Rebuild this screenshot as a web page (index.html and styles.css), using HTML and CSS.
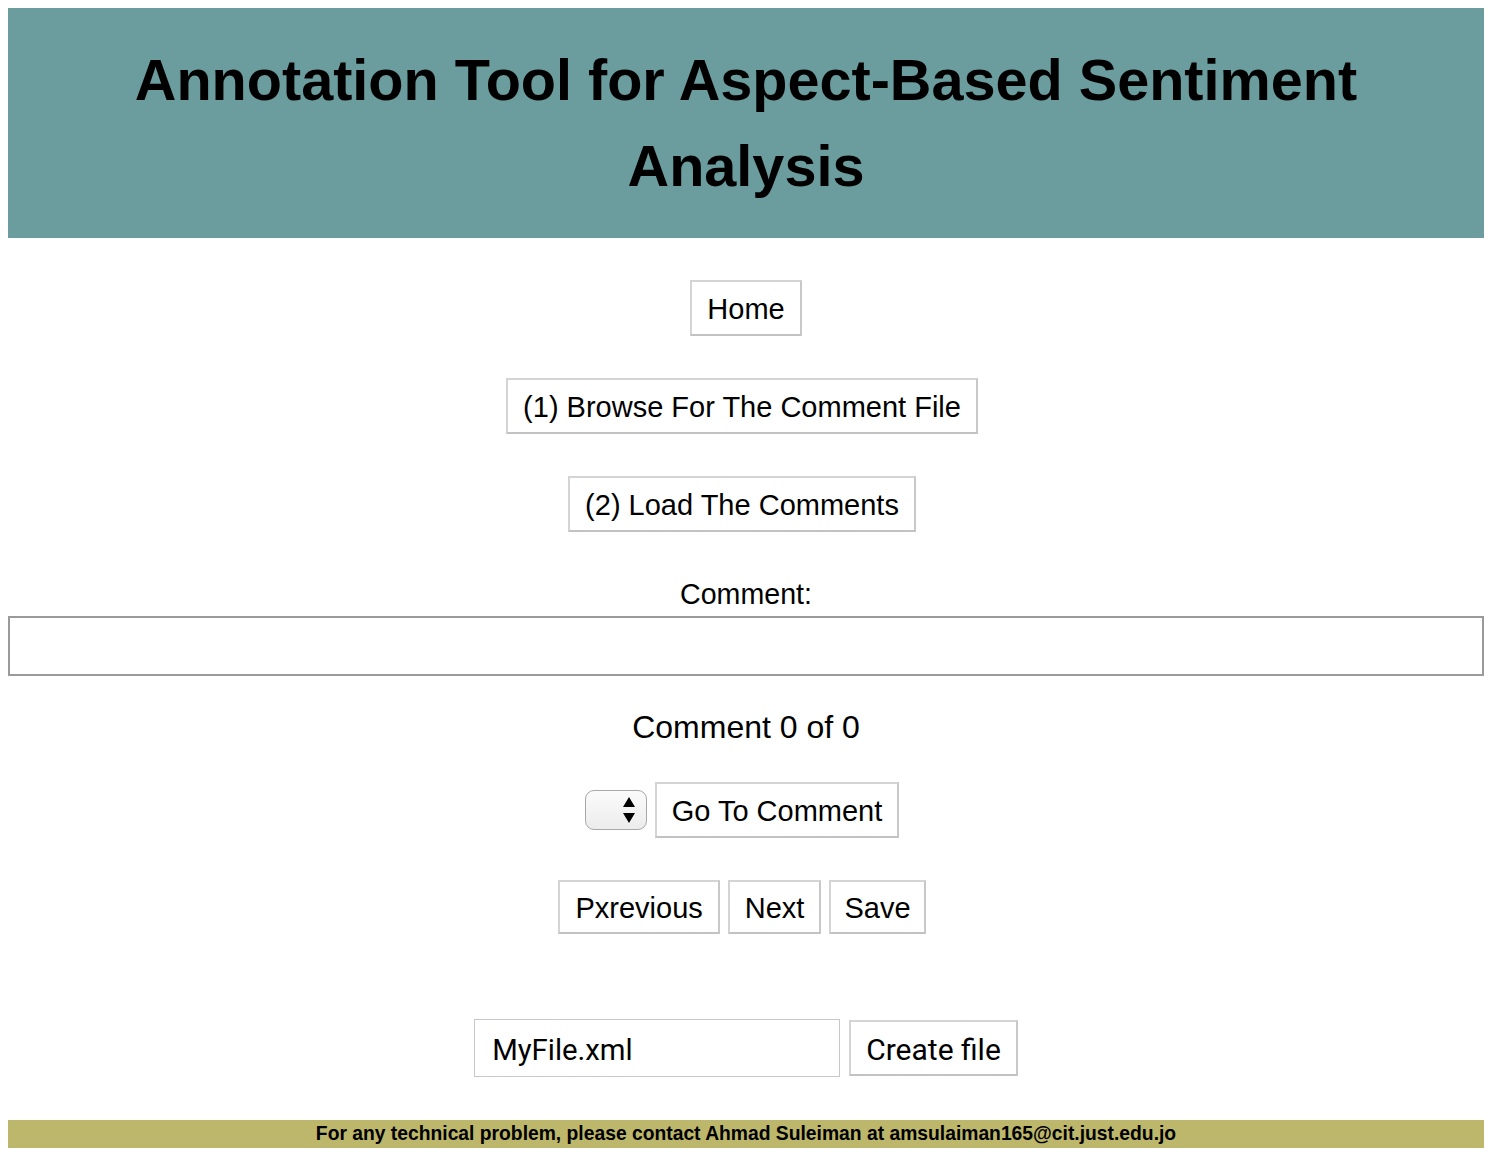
FILE: index.html
```html
<!DOCTYPE html>
<html>
<head>
<meta charset="utf-8">
<title>Annotation Tool</title>
<link rel="stylesheet" href="styles.css">
</head>
<body>
<header class="banner">
  <h1 class="title">Annotation Tool for Aspect-Based Sentiment Analysis</h1>
</header>
<main class="main">
  <button class="btn btn-home">Home</button>
  <button class="btn btn-gap shift">(1) Browse For The Comment File</button>
  <button class="btn btn-gap shift">(2) Load The Comments</button>
  <div class="label">Comment:</div>
  <div class="comment-box"></div>
  <div class="counter">Comment 0 of 0</div>
  <div class="row row-go shift">
    <div class="select">
      <svg width="14" height="30" viewBox="0 0 14 30"><path d="M7 2 L13 12 L1 12 Z M7 28 L13 18 L1 18 Z" fill="#000"/></svg>
    </div>
    <button class="btn">Go To Comment</button>
  </div>
  <div class="row row-nav shift">
    <button class="btn btn-nav">Pxrevious</button>
    <button class="btn btn-nav">Next</button>
    <button class="btn btn-nav btn-save">Save</button>
  </div>
  <div class="row row-file">
    <div class="file-input">MyFile.xml</div>
    <button class="btn btn-create">Create file</button>
  </div>
</main>
<footer class="footer">For any technical problem, please contact Ahmad Suleiman at amsulaiman165@cit.just.edu.jo</footer>
</body>
</html>
```

FILE: styles.css
```css
body {
  margin: 8px 10px 8px 8px;
  font-family: "Liberation Sans", Arial, sans-serif;
  color: #000;
  background: #fff;
}
.banner {
  background: #6b9c9e;
  padding: 29px 100px;
}
.title {
  margin: 0;
  text-align: center;
  font-size: 57.6px;
  line-height: 86px;
  font-weight: bold;
}
.main {
  display: flex;
  flex-direction: column;
  align-items: center;
}
.btn {
  font-family: "Liberation Sans", Arial, sans-serif;
  font-size: 29px;
  height: 56px;
  padding: 2px 15px 0;
  background: #fff;
  color: #000;
  border: 2px solid #d4d4d4;
  border-bottom-color: #c2c2c2;
  border-right-color: #c8c8c8;
  box-sizing: border-box;
  margin: 0;
}
.shift { margin-right: 8px; }
.btn-home { margin-top: 42px; }
.btn-gap { margin-top: 42px; }
.label {
  margin-top: 46px;
  font-size: 28.6px;
  line-height: 32px;
}
.comment-box {
  align-self: stretch;
  margin-top: 6px;
  height: 60px;
  border: 2px solid #9a9a9a;
  box-sizing: border-box;
}
.counter {
  margin-top: 32px;
  font-size: 32px;
  line-height: 38px;
}
.row {
  display: flex;
  align-items: center;
  gap: 8px;
}
.row-go { margin-top: 36px; }
.row-nav { margin-top: 42px; }
.btn-nav { height: 54px; }
.btn-save { padding: 2px 13px 0; }
.row-file { margin-top: 85px; gap: 9px; }
.select {
  width: 62px;
  height: 40px;
  box-sizing: border-box;
  border: 1px solid #a8a8a8;
  border-radius: 9px;
  background: linear-gradient(#fbfbfb, #ececec);
  display: flex;
  align-items: center;
  justify-content: flex-end;
  padding-right: 10px;
}
.file-input {
  width: 366px;
  height: 58px;
  box-sizing: border-box;
  border: 1px solid #c8c8c8;
  padding: 3px 0 0 17px;
  display: flex;
  align-items: center;
  font-family: Roboto, "Liberation Sans", sans-serif;
  font-size: 29.3px;
}
.btn-create {
  font-family: Roboto, "Liberation Sans", sans-serif;
  font-size: 30px;
}
.footer {
  margin-top: 43px;
  background: #bdb76b;
  height: 28px;
  line-height: 28px;
  text-align: center;
  font-weight: bold;
  font-size: 19.3px;
}
```
